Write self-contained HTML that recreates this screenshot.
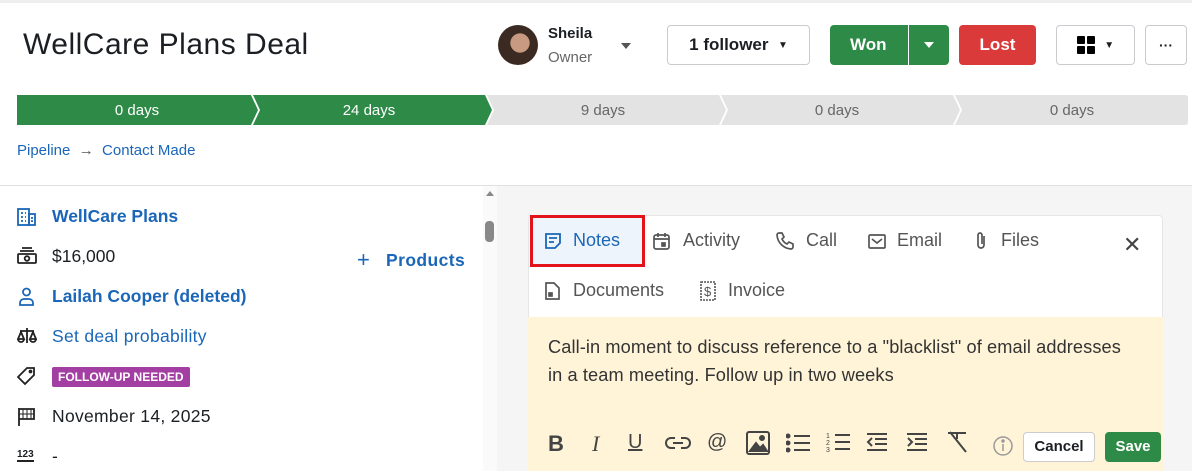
<!DOCTYPE html>
<html><head><meta charset="utf-8"><style>
*{margin:0;padding:0;box-sizing:border-box}
body{width:1192px;height:471px;overflow:hidden;background:#fff;font-family:"Liberation Sans",sans-serif;color:#1b1f23;position:relative}
.a{position:absolute}
.btn{position:absolute;border:1px solid #c9cbcf;border-radius:4px;background:#fff;font-size:17px;font-weight:bold;display:flex;align-items:center;justify-content:center}
.blue{color:#1a66b8}
.row{position:absolute;left:52px;font-size:17.5px}
.ic{position:absolute;left:17px}
.tab{position:absolute;font-size:18px;color:#555}
.tb{position:absolute;top:431px;color:#444;font-size:20px}
</style></head><body>
<div class="a" style="left:0;top:0;width:1192px;height:3px;background:#eee"></div>
<div class="a" style="left:23px;top:28px;font-size:30px;letter-spacing:0.5px;color:#1b1f23">WellCare Plans Deal</div>
<div class="a" style="left:498px;top:25px;width:40px;height:40px;border-radius:50%;background:radial-gradient(circle at 55% 45%,#c99a82 0 30%,#3a2a22 32% 100%)"></div>
<div class="a" style="left:548px;top:25px;font-size:15px;font-weight:bold">Sheila</div>
<div class="a" style="left:548px;top:49px;font-size:15px;color:#666">Owner</div>
<div class="a" style="left:621px;top:43px;border:5px solid transparent;border-top:6px solid #555"></div>
<div class="btn" style="left:667px;top:25px;width:143px;height:40px">1 follower&nbsp;&nbsp;<span style="font-size:10px">▼</span></div>
<div class="a" style="left:830px;top:25px;width:119px;height:40px;background:#2e8b47;border-radius:4px;color:#fff;font-weight:bold;font-size:17px"><span class="a" style="left:20px;top:10px">Won</span><span class="a" style="left:78px;top:0;width:1px;height:40px;background:#fff"></span><span class="a" style="left:94px;top:17px;border:5px solid transparent;border-top:6px solid #fff"></span></div>
<div class="a" style="left:959px;top:25px;width:77px;height:40px;background:#db3a3a;border-radius:4px;color:#fff;font-weight:bold;font-size:17px;text-align:center;line-height:40px">Lost</div>
<div class="btn" style="left:1056px;top:25px;width:79px;height:40px"><svg width="18" height="18"><rect x="0" y="0" width="8" height="8" rx="1"/><rect x="10" y="0" width="8" height="8" rx="1"/><rect x="0" y="10" width="8" height="8" rx="1"/><rect x="10" y="10" width="8" height="8" rx="1"/></svg>&nbsp;&nbsp;<span style="font-size:10px">▼</span></div>
<div class="btn" style="left:1145px;top:25px;width:42px;height:40px;font-size:14px">···</div>
<svg class="a" style="left:17px;top:95px" width="1171" height="30">
<g>
<path d="M0 0 H234 L241 15 L234 30 H0 Z" fill="#2e8b47"/>
<path d="M236 0 H468 L475 15 L468 30 H236 L243 15 Z" fill="#2e8b47"/>
<path d="M470 0 H702 L709 15 L702 30 H470 L477 15 Z" fill="#e3e3e3"/>
<path d="M704 0 H936 L943 15 L936 30 H704 L711 15 Z" fill="#e3e3e3"/>
<path d="M938 0 H1168 Q1171 0 1171 3 V27 Q1171 30 1168 30 H938 L945 15 Z" fill="#e3e3e3"/>
</g>
<g font-family="Liberation Sans" font-size="15" text-anchor="middle">
<text x="120" y="20" fill="#fff">0 days</text><text x="352" y="20" fill="#fff">24 days</text>
<text x="586" y="20" fill="#666">9 days</text><text x="820" y="20" fill="#666">0 days</text><text x="1055" y="20" fill="#666">0 days</text></g>
</svg>
<div class="a blue" style="left:17px;top:142px;font-size:15px">Pipeline&nbsp;&nbsp;<span style="color:#555">→</span>&nbsp;&nbsp;Contact Made</div>
<div class="a" style="left:0;top:185px;width:1192px;height:1px;background:#e0e0e0"></div>
<div class="a" style="left:497px;top:186px;width:695px;height:285px;background:#f5f5f5"></div>
<div class="a" style="left:483px;top:186px;width:14px;height:285px;background:#fafafa"></div>
<div class="a" style="left:486px;top:191px;border:4px solid transparent;border-bottom:5px solid #888;border-top:0"></div>
<div class="a" style="left:485px;top:221px;width:9px;height:21px;border-radius:4px;background:#888"></div>
<svg class="ic" style="top:208px" width="19" height="18" fill="none" stroke="#1a66b8" stroke-width="1.8"><rect x="1" y="1" width="11" height="16"/><rect x="12" y="6" width="6" height="11"/><path d="M4 5h2M8 5h1M4 9h2M8 9h1M4 13h2M8 13h1M14 10h2M14 13h2"/></svg>
<div class="row blue" style="top:206px;font-weight:bold">WellCare Plans</div>
<svg class="ic" style="top:247px" width="20" height="18" fill="none" stroke="#222" stroke-width="1.8"><path d="M5 1h10M3 4h14"/><rect x="1" y="7" width="18" height="9" rx="1"/><circle cx="10" cy="11.5" r="2.3"/></svg>
<div class="row" style="top:246px">$16,000</div>
<div class="a blue" style="left:357px;top:246px;font-size:17.5px;font-weight:bold;letter-spacing:0.4px"><span style="font-weight:normal;font-size:22px;position:relative;top:1px">+</span>&nbsp;&nbsp;&nbsp;Products</div>
<svg class="ic" style="top:287px" width="19" height="19" fill="none" stroke="#1a66b8" stroke-width="1.8"><circle cx="9.5" cy="5" r="3.5"/><path d="M3 18v-2a4 4 0 0 1 4-4h5a4 4 0 0 1 4 4v2z"/></svg>
<div class="row blue" style="top:286px;font-weight:bold">Lailah Cooper (deleted)</div>
<svg class="ic" style="top:327px" width="20" height="18" fill="none" stroke="#222" stroke-width="1.8"><path d="M10 1v15M3 4h14M4 5l-3 7h6zM16 5l-3 7h6z"/><path d="M1 12a3 3 0 0 0 6 0M13 12a3 3 0 0 0 6 0"/></svg>
<div class="row blue" style="top:326px;letter-spacing:0.3px">Set deal probability</div>
<svg class="ic" style="top:367px" width="19" height="19" fill="none" stroke="#222" stroke-width="1.8"><path d="M10 1h7v7l-9 9-7-7z"/><circle cx="13.5" cy="4.5" r="1"/></svg>
<div class="a" style="left:52px;top:367px;height:20px;padding:0 6px;background:#a33fa3;color:#fff;font-size:12px;font-weight:bold;line-height:20px;border-radius:2px">FOLLOW-UP NEEDED</div>
<svg class="ic" style="top:407px" width="19" height="19" fill="none" stroke="#222" stroke-width="1.8"><path d="M2 1v18M2 2h15v10H2"/><path d="M6 2v10M10 2v10M14 2v10M2 7h15" stroke-width="1"/></svg>
<div class="row" style="top:406px;letter-spacing:0.3px">November 14, 2025</div>
<div class="ic" style="top:450px;font-size:10px;font-weight:bold;border-bottom:2px solid #222;line-height:10px">123</div>
<div class="row" style="top:446px">-</div>
<div class="a" style="left:528px;top:215px;width:635px;height:256px;background:#fff;border:1px solid #e6e6e6;border-radius:4px"></div>
<div class="a" style="left:528px;top:317px;width:635px;height:154px;background:#fff4d8"></div>
<div class="a" style="left:530px;top:215px;width:115px;height:52px;background:#eef4fb;border:3px solid #e3131b"></div>
<svg class="a" style="left:544px;top:232px" width="18" height="18" fill="none" stroke="#1a66b8" stroke-width="1.8"><path d="M2 2h14v9l-5 5H2z"/><path d="M5 6h8M5 10h5"/></svg>
<div class="tab" style="left:573px;top:230px;color:#1a66b8">Notes</div>
<svg class="a" style="left:653px;top:232px" width="17" height="18" fill="none" stroke="#555" stroke-width="1.7"><rect x="1" y="3" width="15" height="14" rx="2"/><path d="M5 1v4M12 1v4M1 7h15"/><rect x="9" y="11" width="3" height="3" fill="#555"/></svg>
<div class="tab" style="left:683px;top:230px">Activity</div>
<svg class="a" style="left:776px;top:232px" width="18" height="18" fill="none" stroke="#555" stroke-width="1.7"><path d="M3 1l3 0 2 4-2 2a10 10 0 0 0 5 5l2-2 4 2v3a2 2 0 0 1-2 2A15 15 0 0 1 1 3a2 2 0 0 1 2-2z"/></svg>
<div class="tab" style="left:806px;top:230px">Call</div>
<svg class="a" style="left:868px;top:234px" width="18" height="15" fill="none" stroke="#555" stroke-width="1.7"><rect x="1" y="1" width="16" height="13" rx="1"/><path d="M4 5l5 4 5-4"/></svg>
<div class="tab" style="left:897px;top:230px">Email</div>
<svg class="a" style="left:974px;top:231px" width="14" height="20" fill="none" stroke="#555" stroke-width="1.7"><path d="M10 5v9a3 3 0 0 1-6 0V4a2 2 0 0 1 4 0v9"/></svg>
<div class="tab" style="left:1001px;top:230px">Files</div>
<div class="a" style="left:1123px;top:232px;font-size:22px;color:#444">✕</div>
<svg class="a" style="left:545px;top:282px" width="15" height="18" fill="none" stroke="#555" stroke-width="1.7"><path d="M1 1h8l5 5v11H1z"/><rect x="4" y="11" width="3" height="3" fill="#555"/></svg>
<div class="tab" style="left:573px;top:280px">Documents</div>
<svg class="a" style="left:699px;top:281px" width="18" height="20" fill="none" stroke="#555" stroke-width="1.6"><path d="M2 1h14v18H2z" stroke-dasharray="2 1"/><text x="5" y="15" font-size="13" fill="#555" stroke="none" font-family="Liberation Sans">$</text></svg>
<div class="tab" style="left:728px;top:280px">Invoice</div>
<div class="a" style="left:548px;top:333px;font-size:18.2px;letter-spacing:0.1px;line-height:28px;color:#333">Call-in moment to discuss reference to a "blacklist" of email addresses<br>in a team meeting. Follow up in two weeks</div>
<div class="tb" style="left:548px;font-weight:bold;font-size:22px">B</div>
<div class="tb" style="left:592px;font-style:italic;font-family:'Liberation Serif';font-size:22px">I</div>
<div class="tb" style="left:628px;text-decoration:underline">U</div>
<svg class="a" style="left:665px;top:436px" width="26" height="14" fill="none" stroke="#444" stroke-width="2"><path d="M10 2H6a5 5 0 0 0 0 10h4M16 2h4a5 5 0 0 1 0 10h-4M8 7h10"/></svg>
<div class="tb" style="left:707px">@</div>
<svg class="a" style="left:746px;top:431px" width="24" height="24" fill="none" stroke="#444" stroke-width="2"><rect x="1" y="1" width="22" height="22" rx="2"/><path d="M4 20l6-8 4 5 3-3 4 6z" fill="#444"/><circle cx="16" cy="7" r="2" fill="#444"/></svg>
<svg class="a" style="left:786px;top:433px" width="24" height="20" stroke="#444" stroke-width="2"><path d="M8 3h16M8 10h16M8 17h16"/><circle cx="2" cy="3" r="1.5" fill="#444"/><circle cx="2" cy="10" r="1.5" fill="#444"/><circle cx="2" cy="17" r="1.5" fill="#444"/></svg>
<svg class="a" style="left:826px;top:431px" width="24" height="22" stroke="#444" stroke-width="2"><path d="M9 4h15M9 11h15M9 18h15"/><text x="0" y="7" font-size="7" fill="#444" stroke="none">1</text><text x="0" y="14" font-size="7" fill="#444" stroke="none">2</text><text x="0" y="21" font-size="7" fill="#444" stroke="none">3</text></svg>
<svg class="a" style="left:866px;top:432px" width="22" height="20" fill="none" stroke="#444" stroke-width="2"><path d="M1 2h20M9 7h12M9 12h12M1 18h20M6 6l-4 4 4 4"/></svg>
<svg class="a" style="left:906px;top:432px" width="22" height="20" fill="none" stroke="#444" stroke-width="2"><path d="M1 2h20M9 7h12M9 12h12M1 18h20M2 6l4 4-4 4"/></svg>
<svg class="a" style="left:946px;top:430px" width="22" height="24" fill="none" stroke="#444" stroke-width="2"><path d="M2 3h18M11 3v6M4 2l16 20"/></svg>
<svg class="a" style="left:993px;top:436px" width="20" height="20" fill="none" stroke="#999" stroke-width="1.5"><circle cx="10" cy="10" r="9"/><path d="M10 8v7"/><circle cx="10" cy="5" r="1" fill="#999"/></svg>
<div class="a" style="left:1023px;top:432px;width:72px;height:30px;border:1px solid #ccc;border-radius:4px;background:#fff;font-size:15px;font-weight:bold;text-align:center;line-height:28px">Cancel</div>
<div class="a" style="left:1105px;top:432px;width:56px;height:30px;border-radius:4px;background:#2e8b47;color:#fff;font-size:15px;font-weight:bold;text-align:center;line-height:30px">Save</div>
</body></html>
